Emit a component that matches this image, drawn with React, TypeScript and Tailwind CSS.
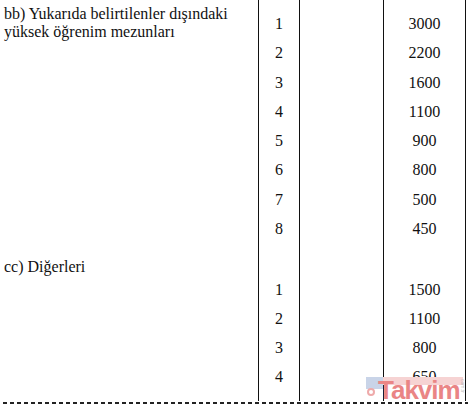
const firstRows = [
  ["1", "3000"],
  ["2", "2200"],
  ["3", "1600"],
  ["4", "1100"],
  ["5", "900"],
  ["6", "800"],
  ["7", "500"],
  ["8", "450"],
];

const secondRows = [
  ["1", "1500"],
  ["2", "1100"],
  ["3", "800"],
  ["4", "650"],
];

function Watermark() {
  return (
    <div className="absolute left-[366px] top-[377px] w-[97px] h-[23px] pointer-events-none">
      {/* blue tab + pink band */}
      <div className="absolute left-0 top-0 w-[17px] h-[12px] bg-[#c9d4e8]" />
      <div className="absolute left-[17px] top-0 w-[80px] h-[8px] bg-[#f6d3d3]" />
      <div className="absolute left-[1px] top-[11px] w-[8px] h-[8px] rounded-full border-2 border-[#eeaaaa]" />
      <div className="absolute left-[12px] top-0 whitespace-nowrap font-['Liberation_Sans',sans-serif] font-bold text-[26px] leading-[26px] tracking-[-1px] text-[#ea8585]">
        Takvim
      </div>
      <span className="absolute right-[-2px] top-[2px] font-['Liberation_Sans',sans-serif] text-[5px] leading-[5px] text-[#b9b9b9] [writing-mode:vertical-rl]">
        com.tr
      </span>
    </div>
  );
}

export default function App() {
  return (
    <div className="relative w-[471px] h-[406px] bg-white overflow-hidden font-['Liberation_Serif',serif] text-[16px] text-[#111]">
      <div className="flex h-[401px]">
        {/* Description */}
        <div className="w-[258px] pl-[4px] pt-[5px] leading-[18px]">
          <p>
            bb) Yukarıda belirtilenler dışındaki
            <br />
            yüksek öğrenim mezunları
          </p>
          <p className="mt-[216.5px]">cc) Diğerleri</p>
        </div>

        {/* Order */}
        <div className="w-[41px] border-l border-[#111] flex flex-col items-center pt-[9px]">
          {firstRows.map(([n]) => (
            <span key={"a" + n} className="leading-[29.3px]">{n}</span>
          ))}
          <div className="h-[31.6px]" />
          {secondRows.map(([n]) => (
            <span key={"b" + n} className="leading-[29px]">{n}</span>
          ))}
        </div>

        {/* Empty */}
        <div className="w-[84px] border-l border-[#111]" />

        {/* Amount */}
        <div className="w-[83px] border-l border-r border-[#111] flex flex-col items-center pt-[9px]">
          {firstRows.map(([n, v]) => (
            <span key={"a" + n} className="leading-[29.3px]">{v}</span>
          ))}
          <div className="h-[31.6px]" />
          {secondRows.map(([n, v]) => (
            <span key={"b" + n} className="leading-[29px]">{v}</span>
          ))}
        </div>
      </div>

      <div className="mx-[3px] mt-[1px] h-[2px] bg-[repeating-linear-gradient(to_right,#222_0_4px,transparent_4px_7px)]" />

      <Watermark />
    </div>
  );
}
